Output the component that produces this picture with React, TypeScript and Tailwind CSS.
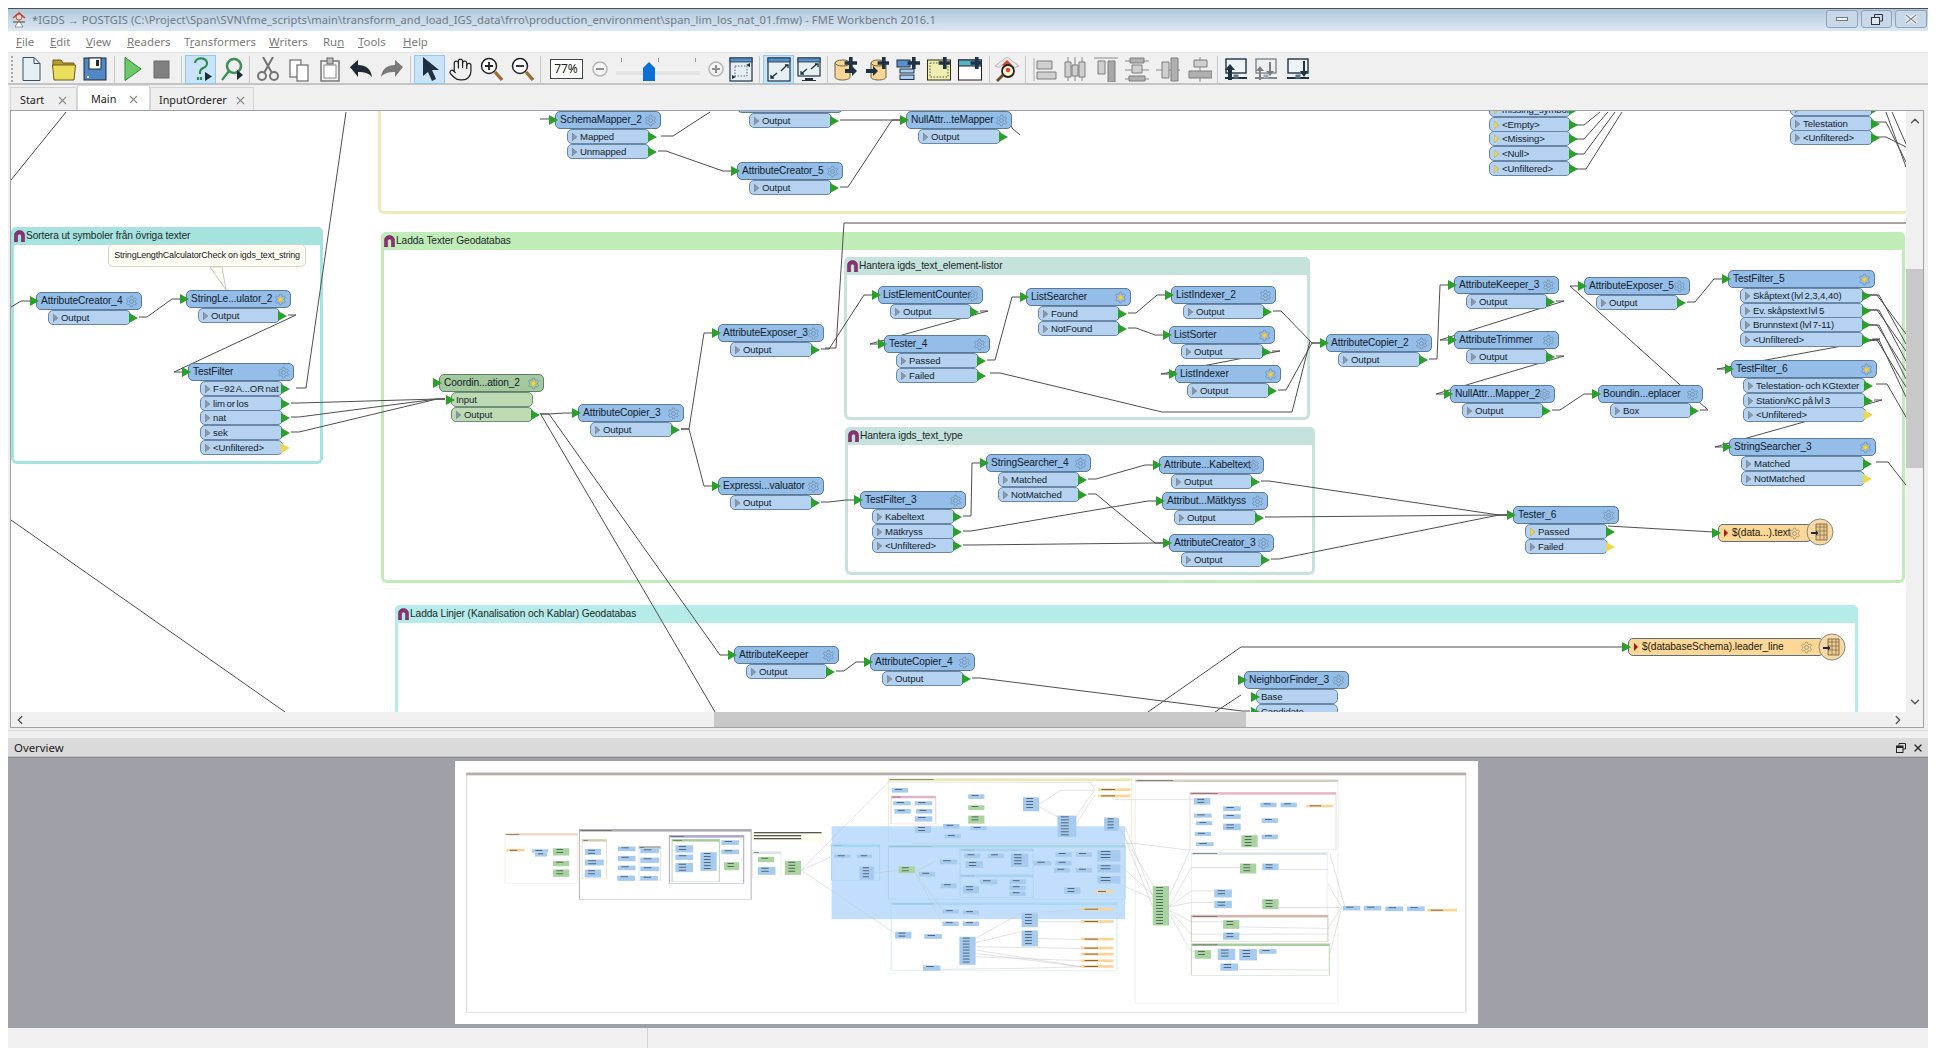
import React from 'react';
import { Hand, X, ChevronUp, ChevronDown, ChevronLeft, ChevronRight } from 'lucide-react';

const OX = 11;
const OY = 112;

type Port = { n: string; yo?: boolean; yi?: boolean; input?: boolean };
type Node = { id: string; t: string; x: number; r: number; y: number; ports: Port[]; sun?: boolean; green?: boolean };
const p = (...names: string[]): Port[] => names.map((n) => ({ n }));

const nodes: Node[] = [
  { id: 'ac4', t: 'AttributeCreator_4', x: 36, r: 142, y: 293, ports: p('Output') },
  { id: 'sl2', t: 'StringLe...ulator_2', x: 186, r: 291, y: 291, ports: p('Output'), sun: true },
  { id: 'tf', t: 'TestFilter', x: 188, r: 294, y: 364, ports: [...p('F=92 A...OR nat', 'lim or los', 'nat', 'sek'), { n: '<Unfiltered>', yo: true }] },
  { id: 'co2', t: 'Coordin...ation_2', x: 439, r: 544, y: 375, green: true, sun: true, ports: [{ n: 'Input', input: true }, { n: 'Output' }] },
  { id: 'ac3', t: 'AttributeCopier_3', x: 578, r: 684, y: 405, ports: p('Output') },
  { id: 'ae3', t: 'AttributeExposer_3', x: 718, r: 824, y: 325, ports: p('Output') },
  { id: 'lec', t: 'ListElementCounter', x: 878, r: 983, y: 287, ports: p('Output') },
  { id: 't4', t: 'Tester_4', x: 884, r: 990, y: 336, ports: p('Passed', 'Failed') },
  { id: 'ls', t: 'ListSearcher', x: 1026, r: 1131, y: 289, ports: p('Found', 'NotFound'), sun: true },
  { id: 'li2', t: 'ListIndexer_2', x: 1171, r: 1276, y: 287, ports: p('Output') },
  { id: 'lso', t: 'ListSorter', x: 1169, r: 1275, y: 327, ports: p('Output'), sun: true },
  { id: 'li', t: 'ListIndexer', x: 1175, r: 1281, y: 366, ports: p('Output'), sun: true },
  { id: 'ev', t: 'Expressi...valuator', x: 718, r: 824, y: 478, ports: p('Output') },
  { id: 'tf3', t: 'TestFilter_3', x: 860, r: 966, y: 492, ports: p('Kabeltext', 'Mätkryss', '<Unfiltered>') },
  { id: 'ss4', t: 'StringSearcher_4', x: 986, r: 1091, y: 455, ports: p('Matched', 'NotMatched') },
  { id: 'akb', t: 'Attribute...Kabeltext', x: 1159, r: 1264, y: 457, ports: p('Output') },
  { id: 'amk', t: 'Attribut...Mätktyss', x: 1162, r: 1268, y: 493, ports: p('Output') },
  { id: 'acr3', t: 'AttributeCreator_3', x: 1169, r: 1274, y: 535, ports: p('Output') },
  { id: 'acp2', t: 'AttributeCopier_2', x: 1326, r: 1432, y: 335, ports: p('Output') },
  { id: 'ak3', t: 'AttributeKeeper_3', x: 1454, r: 1559, y: 277, ports: p('Output') },
  { id: 'atr', t: 'AttributeTrimmer', x: 1454, r: 1559, y: 332, ports: p('Output') },
  { id: 'nm2', t: 'NullAttr...Mapper_2', x: 1450, r: 1555, y: 386, ports: p('Output') },
  { id: 'ae5', t: 'AttributeExposer_5', x: 1584, r: 1690, y: 278, ports: p('Output') },
  { id: 'bo', t: 'Boundin...eplacer', x: 1598, r: 1703, y: 386, ports: p('Box') },
  { id: 'tf5', t: 'TestFilter_5', x: 1728, r: 1875, y: 271, sun: true, ports: p('Skåptext (lvl 2,3,4,40)', 'Ev. skåpstext lvl 5', 'Brunnstext (lvl 7-11)', '<Unfiltered>') },
  { id: 'tf6', t: 'TestFilter_6', x: 1731, r: 1877, y: 361, sun: true, ports: [...p('Telestation- och KGtexter', 'Station/KC på lvl 3'), { n: '<Unfiltered>', yo: true }] },
  { id: 'ss3', t: 'StringSearcher_3', x: 1729, r: 1876, y: 439, sun: true, ports: [{ n: 'Matched' }, { n: 'NotMatched', yo: true }] },
  { id: 't6', t: 'Tester_6', x: 1513, r: 1619, y: 507, ports: [{ n: 'Passed', yi: true }, { n: 'Failed', yo: true }] },
  { id: 'sm2', t: 'SchemaMapper_2', x: 555, r: 661, y: 112, ports: p('Mapped', 'Unmapped') },
  { id: 'to', t: '', x: 737, r: 843, y: 96, ports: p('Output') },
  { id: 'ntm', t: 'NullAttr...teMapper', x: 906, r: 1012, y: 112, ports: p('Output') },
  { id: 'ac5', t: 'AttributeCreator_5', x: 737, r: 843, y: 163, ports: p('Output') },
  { id: 'rt1', t: '', x: 1477, r: 1582, y: 85, ports: ['missing_symbol', '<Empty>', '<Missing>', '<Null>', '<Unfiltered>'].map((n) => ({ n, yi: true })) },
  { id: 'rt2', t: '', x: 1778, r: 1884, y: 84, ports: p('', 'Telestation', '<Unfiltered>') },
  { id: 'ak', t: 'AttributeKeeper', x: 734, r: 839, y: 647, ports: p('Output') },
  { id: 'ac4b', t: 'AttributeCopier_4', x: 870, r: 975, y: 654, ports: p('Output') },
  { id: 'nf3', t: 'NeighborFinder_3', x: 1244, r: 1349, y: 672, ports: [{ n: 'Base', input: true }, { n: 'Candidate', input: true }] },
];

const byId: Record<string, Node> = Object.fromEntries(nodes.map((n) => [n.id, n]));
const portY = (n: Node, i: number) => n.y + 18 + Math.round(i * 14.7);
const outPt = (id: string, i: number): [number, number] => {
  const n = byId[id];
  return [n.r - 11 + 8, portY(n, i) + 7];
};
const inPt = (id: string, i = -1): [number, number] => {
  const n = byId[id];
  return i < 0 ? [n.x - 6, n.y + 9] : [n.x + 6, portY(n, i) + 7];
};
const wirePath = (a: [number, number], b: [number, number]) =>
  `M${a[0] - OX} ${a[1] - OY}h8L${b[0] - 8 - OX} ${b[1] - OY}h8`;

const wires: [string, number, string, number?][] = [
  ['ac4', 0, 'sl2'], ['sl2', 0, 'tf'], ['tf', 1, 'co2', 0], ['tf', 2, 'co2', 0], ['tf', 3, 'co2', 0],
  ['co2', 1, 'ac3'], ['co2', 1, 'ak'], ['ac3', 0, 'ae3'], ['ac3', 0, 'ev'], ['ae3', 0, 'lec'],
  ['lec', 0, 't4'], ['t4', 0, 'ls'], ['ls', 0, 'li2'], ['ls', 1, 'lso'], ['lso', 0, 'li'],
  ['li2', 0, 'acp2'], ['li', 0, 'acp2'], ['acp2', 0, 'ak3'], ['ak3', 0, 'atr'], ['atr', 0, 'nm2'],
  ['nm2', 0, 'bo'], ['bo', 0, 'ae5'], ['ae5', 0, 'tf5'], ['tf5', 3, 'tf6'], ['tf6', 1, 'ss3'],
  ['ev', 0, 'tf3'], ['tf3', 0, 'ss4'], ['tf3', 1, 'amk'], ['tf3', 2, 'acr3'], ['ss4', 0, 'akb'], ['ss4', 1, 'acr3'],
  ['akb', 0, 't6'], ['amk', 0, 't6'], ['acr3', 0, 't6'], ['ak', 0, 'ac4b'], ['ac4b', 0, 'nf3', 1],
  ['sm2', 1, 'ac5'], ['to', 0, 'ntm'], ['ac5', 0, 'ntm'],
];

const rawLines: number[][] = [
  [11, 181, 66, 113],
  [11, 521, 285, 713],
  [11, 308, 21, 302, 30, 302],
  [296, 389, 306, 389, 346, 113],
  [540, 414, 715, 713],
  [825, 349, 836, 349, 844, 224, 1906, 224],
  [990, 374, 1000, 374, 1162, 413, 1292, 413, 1310, 342],
  [1148, 713, 1241, 648, 1624, 648],
  [1215, 713, 1241, 696],
  [1608, 527, 1714, 533],
  [661, 137, 673, 137, 710, 113],
  [540, 120, 556, 120, 564, 113],
  [1020, 136, 1012, 129, 1005, 113],
  [1572, 126, 1584, 126, 1600, 113],
  [1572, 140, 1584, 140, 1608, 113],
  [1572, 155, 1584, 155, 1615, 113],
  [1572, 170, 1586, 170, 1622, 113],
  [1873, 123, 1886, 123, 1906, 163],
  [1873, 138, 1886, 138, 1906, 148],
  [1886, 113, 1906, 168],
  [1892, 113, 1906, 145],
  [1865, 296, 1877, 296, 1906, 335],
  [1865, 296, 1879, 296, 1906, 345],
  [1865, 311, 1877, 311, 1906, 352],
  [1865, 311, 1879, 311, 1906, 362],
  [1865, 326, 1877, 326, 1906, 372],
  [1865, 326, 1879, 326, 1906, 380],
  [1865, 341, 1877, 341, 1906, 388],
  [1865, 341, 1879, 341, 1906, 398],
  [1876, 385, 1887, 385, 1906, 418],
  [1876, 463, 1888, 463, 1906, 486],
];

const marks = [
  { t: 'Ladda Texter Geodatabas', x: 381, y: 232, r: 1905, b: 583, c: 'border-[#c0ecb8]', h: 'bg-[#c0ecb8]' },
  { t: '', x: 378, y: 40, r: 1910, b: 214, c: 'border-[#efe9b7]', h: 'bg-[#efe9b7]' },
  { t: 'Sortera ut symboler från övriga texter', x: 11, y: 227, r: 323, b: 464, c: 'border-[#a6e3de]', h: 'bg-[#a6e3de]' },
  { t: 'Hantera igds_text_element-listor', x: 844, y: 257, r: 1310, b: 420, c: 'border-[#c5e2dc]', h: 'bg-[#c5e2dc]' },
  { t: 'Hantera igds_text_type', x: 845, y: 427, r: 1315, b: 575, c: 'border-[#c5e2dc]', h: 'bg-[#c5e2dc]' },
  { t: 'Ladda Linjer (Kanalisation och Kablar) Geodatabas', x: 395, y: 605, r: 1858, b: 830, c: 'border-[#b5ebe9]', h: 'bg-[#b5ebe9]' },
];

function Arch() {
  return (
    <svg width="11" height="12" viewBox="0 0 11 12" className="shrink-0">
      <path d="M0.5 12V5a5 4.5 0 0 1 10 0v7H7.5V6a2 2 0 0 0-4 0v6z" fill="#8f2f74" stroke="#5a2050" strokeWidth="0.5" />
    </svg>
  );
}

const GEAR =
  'M12.22 2h-.44a2 2 0 0 0-2 2v.18a2 2 0 0 1-1 1.73l-.43.25a2 2 0 0 1-2 0l-.15-.08a2 2 0 0 0-2.73.73l-.22.38a2 2 0 0 0 .73 2.73l.15.1a2 2 0 0 1 1 1.72v.51a2 2 0 0 1-1 1.74l-.15.09a2 2 0 0 0-.73 2.73l.22.38a2 2 0 0 0 2.73.73l.15-.08a2 2 0 0 1 2 0l.43.25a2 2 0 0 1 1 1.73V20a2 2 0 0 0 2 2h.44a2 2 0 0 0 2-2v-.18a2 2 0 0 1 1-1.73l.43-.25a2 2 0 0 1 2 0l.15.08a2 2 0 0 0 2.73-.73l.22-.39a2 2 0 0 0-.73-2.73l-.15-.08a2 2 0 0 1-1-1.74v-.5a2 2 0 0 1 1-1.74l.15-.09a2 2 0 0 0 .73-2.73l-.22-.38a2 2 0 0 0-2.73-.73l-.15.08a2 2 0 0 1-2 0l-.43-.25a2 2 0 0 1-1-1.73V4a2 2 0 0 0-2-2z';

function Gear({ sun, color = '#6f8fae' }: { sun?: boolean; color?: string }) {
  return (
    <svg width="13" height="13" viewBox="0 0 24 24" className="shrink-0">
      <path d={GEAR} fill="none" stroke={color} strokeWidth="1.6" />
      <circle cx="12" cy="12" r="3.6" fill={sun ? '#ffd63a' : 'none'} stroke={sun ? '#e8b820' : color} strokeWidth="1.6" />
    </svg>
  );
}

function GreenTri({ className }: { className: string }) {
  return (
    <svg width="9" height="10" viewBox="0 0 9 10" className={className}>
      <path d="M0 0L9 5L0 10z" fill="#2a9f2a" />
    </svg>
  );
}

const nodeText = 'whitespace-nowrap text-[10.2px] leading-none tracking-[-0.1px]';
const portText = 'whitespace-nowrap text-[9.6px] leading-none tracking-[-0.1px] [word-spacing:-1px]';

function Xform({ n }: { n: Node }) {
  const head = n.green ? 'bg-[#a5c99e] border-[#5f7f6a]' : 'bg-[#94bde7] border-[#5a7a98]';
  const port = n.green ? 'bg-[#bddab3] border-[#6f8f7a]' : 'bg-[#b5d3f0] border-[#6a88a6]';
  return (
    <div className="absolute" style={{ left: n.x - OX, top: n.y - OY, width: n.r - n.x }}>
      <div className={`relative h-[18px] rounded-[5px] border flex items-center pl-[4px] ${head}`}>
        <span className={`${nodeText} text-[#10202c]`}>{n.t}</span>
        <span className="absolute right-[3px] top-[2px] flex">
          <Gear sun={n.sun} />
        </span>
        <GreenTri className="absolute left-[-7px] top-[3px]" />
      </div>
      {n.ports.map((pt, i) => (
        <div
          key={i}
          className={`absolute left-[12px] right-[11px] h-[15px] rounded-[5px] border flex items-center ${port}`}
          style={{ top: 18 + Math.round(i * 14.7) }}
        >
          {pt.input ? (
            <GreenTri className="absolute left-[-6px] top-[2px]" />
          ) : (
            <>
              <svg width="5" height="8" viewBox="0 0 5 8" className="ml-[4px] mr-[3px] shrink-0">
                <path d="M0 0L5 4L0 8z" fill={pt.yi ? '#e8d860' : '#8a97a8'} stroke={pt.yi ? '#a89a40' : '#6f7c8c'} strokeWidth="0.5" />
              </svg>
              <svg width="9" height="10" viewBox="0 0 9 10" className="absolute right-[-8px] top-[2px]">
                <path d="M0 0L9 5L0 10z" fill={pt.yo ? '#ecd850' : '#2a9f2a'} />
              </svg>
            </>
          )}
          <span className={`${portText} text-[#14222e] ${pt.input ? 'ml-[4px]' : ''}`}>{pt.n}</span>
        </div>
      ))}
    </div>
  );
}

function Writer({ t, x, r, y, h, cx, cy }: { t: string; x: number; r: number; y: number; h: number; cx: number; cy: number }) {
  return (
    <>
      <div
        className="absolute rounded-[5px] border border-[#5a7080] bg-[#fdd796] flex items-center"
        style={{ left: x - OX, top: y - OY, width: r - x, height: h }}
      >
        <GreenTri className="absolute left-[-7px] top-[3px]" />
        <svg width="4" height="8" viewBox="0 0 4 8" className="ml-[5px] mr-[4px] shrink-0">
          <path d="M0 0L4 4L0 8z" fill="#b01818" />
        </svg>
        <span className={`${nodeText} text-[#1a1a10]`}>{t}</span>
        <span className="absolute right-[10px] top-[2px]">
          <Gear color="#9a8f70" />
        </span>
      </div>
      <svg className="absolute" width="28" height="28" viewBox="0 0 28 28" style={{ left: cx - 14 - OX, top: cy - 14 - OY }}>
        <circle cx="14" cy="14" r="13" fill="#f6d9a6" stroke="#8a8a78" />
        <path d="M10 6h11v16H10z" fill="#f0c88a" stroke="#6a5a40" strokeWidth="0.8" />
        <path d="M10 9h11M10 13h11M10 17h11M14 6v16M18 6v16" stroke="#7a6a50" strokeWidth="0.7" fill="none" />
        <path d="M5 14h5v-1.5l2.5 2.5-2.5 2.5V16H5z" fill="#1d2a35" />
      </svg>
    </>
  );
}

function Canvas() {
  return (
    <div className="relative flex-1 min-w-0 bg-white overflow-hidden font-['Liberation_Sans',sans-serif]">
      {marks.map((m) => (
        <div
          key={m.t + m.x}
          className={`absolute border-[3px] border-t-0 rounded-[6px] bg-white ${m.c}`}
          style={{ left: m.x - OX, top: m.y - OY + 1, width: m.r - m.x, height: m.b - m.y }}
        >
          <div className={`h-[18px] -mx-[3px] rounded-t-[5px] pl-[3px] flex items-center gap-[1px] ${m.h}`}>
            {m.t && <Arch />}
            <span className={`${nodeText} text-[#1c2a2a]`}>{m.t}</span>
          </div>
        </div>
      ))}
      <svg className="absolute left-0 top-0" width="1895" height="601" viewBox="0 0 1895 601">
        <g fill="none" stroke="#4f4f4f" strokeWidth="1">
          {wires.map(([a, i, b, j], k) => (
            <path key={k} d={wirePath(outPt(a, i), inPt(b, j ?? -1))} />
          ))}
          {rawLines.map((l, k) => (
            <polyline key={k} points={l.map((v, idx) => v - (idx % 2 ? OY : OX)).join(' ')} />
          ))}
        </g>
        <path d="M199 156L215 179L211 156z" fill="#fefdf3" stroke="#c9c9bd" />
      </svg>
      <div className="absolute left-[97px] top-[133px] w-[198px] h-[23px] rounded-[5px] border border-[#d5d5c8] bg-[#fefdf3] flex items-center justify-center">
        <span className="whitespace-nowrap text-[9px] leading-none text-[#222] tracking-[-0.2px]">StringLengthCalculatorCheck on igds_text_string</span>
      </div>
      {nodes.map((n) => (
        <Xform key={n.id} n={n} />
      ))}
      <Writer t="$(data...).text" x={1718} r={1812} y={525} h={18} cx={1820} cy={533} />
      <Writer t="$(databaseSchema).leader_line" x={1628} r={1824} y={639} h={18} cx={1832} cy={648} />
    </div>
  );
}

/* ---------- Overview miniature ---------- */
const miniMarks: [number, number, number, number, string, string][] = [
  [98, 249, 205, 400, '#eed9c8', '#f6ece4'],
  [208, 237, 462, 448, '#a8a8ac', '#b4b4b8'],
  [212, 267, 248, 386, '#d8c8b0', '#e8e0d2'],
  [296, 288, 328, 392, '#b0b0b0', '#e4e4e4'],
  [341, 255, 451, 400, '#a9a5cc', '#a9a5cc'],
  [345, 267, 415, 395, '#a0cc98', '#b4d8ae'],
  [464, 304, 506, 382, '#d8e4e0', '#eaf0ee'],
  [581, 283, 652, 391, '#8fdfe0', '#9fe4e4'],
  [665, 85, 1025, 275, '#ece8b0', '#f0eec4'],
  [669, 137, 735, 221, '#e0b4c8', '#ecd0dc'],
  [665, 285, 1015, 447, '#a0dcb0', '#a8dcc0'],
  [771, 296, 879, 372, '#b4d0cc', '#b4d4dc'],
  [771, 374, 879, 442, '#b4d0cc', '#b4d4dc'],
  [669, 458, 1003, 662, '#a8e4e4', '#c8f0f0'],
  [1030, 88, 1330, 760, '#d4d0c0', '#eeeeea'],
  [1111, 126, 1327, 299, '#e4b4c4', '#ecd8e0'],
  [1113, 307, 1314, 492, '#d8e4ec', '#e8eff4'],
  [1113, 495, 1315, 575, '#d0b8a8', '#dcc4b8'],
  [1113, 581, 1317, 677, '#a8cca0', '#c0d8ba'],
];
const miniB = [
  [138, 297, 24, 10], [142, 307, 18, 12], [216, 296, 24, 18], [216, 328, 28, 18], [216, 358, 24, 24], [265, 289, 26, 14], [265, 317, 26, 16], [265, 346, 26, 14], [264, 376, 26, 16],
  [298, 295, 28, 14], [298, 322, 28, 16], [298, 349, 28, 14], [298, 377, 26, 14], [350, 285, 26, 22], [350, 313, 26, 16], [350, 338, 26, 28], [387, 306, 24, 56], [418, 270, 26, 14], [418, 298, 26, 14],
  [472, 350, 26, 24], [585, 313, 24, 10], [619, 313, 22, 10], [622, 349, 22, 40], [670, 113, 24, 14], [672, 153, 26, 12], [704, 153, 26, 12], [674, 176, 24, 14], [706, 176, 24, 14], [704, 198, 26, 16],
  [704, 228, 24, 20], [746, 221, 24, 14], [748, 252, 24, 12], [783, 132, 24, 14], [786, 228, 24, 12], [864, 141, 24, 42], [915, 196, 28, 64], [984, 202, 22, 40], [710, 365, 24, 14], [741, 328, 26, 14],
  [742, 400, 24, 14], [777, 310, 24, 14], [812, 310, 24, 14], [846, 310, 26, 40], [779, 333, 26, 20], [800, 388, 26, 14], [775, 406, 24, 24], [844, 388, 24, 14], [844, 406, 24, 14], [844, 424, 24, 14],
  [925, 411, 24, 20], [880, 332, 26, 14], [912, 306, 24, 14], [912, 332, 24, 14], [910, 353, 24, 14], [942, 306, 24, 14], [942, 353, 24, 14], [974, 300, 34, 34], [974, 343, 34, 24], [974, 378, 34, 22],
  [745, 478, 24, 12], [775, 481, 24, 12], [745, 514, 24, 14], [775, 514, 24, 14], [675, 545, 24, 20], [718, 552, 26, 14], [770, 560, 24, 84], [862, 489, 24, 42], [862, 541, 24, 48], [716, 646, 26, 16],
  [1117, 143, 24, 20], [1117, 190, 26, 12], [1120, 213, 24, 12], [1118, 245, 24, 12], [1120, 276, 26, 12], [1160, 168, 26, 14], [1160, 192, 26, 14], [1160, 220, 26, 20], [1215, 157, 24, 14], [1245, 157, 24, 14],
  [1217, 204, 24, 14], [1217, 253, 24, 14], [1218, 340, 24, 20], [1147, 418, 26, 24], [1147, 452, 26, 22], [1160, 547, 24, 22], [1152, 596, 26, 34], [1184, 597, 26, 34], [1213, 597, 26, 14], [1156, 640, 26, 22],
  [1337, 467, 26, 14], [1368, 467, 26, 14], [1400, 469, 26, 14], [1432, 469, 26, 14],
];
const miniG = [
  [169, 294, 24, 22], [169, 332, 24, 16], [169, 358, 24, 22], [422, 336, 22, 24], [472, 320, 24, 16], [512, 332, 24, 42], [783, 165, 24, 14], [783, 196, 24, 24], [680, 349, 24, 20], [1056, 408, 24, 118],
  [1187, 255, 24, 36], [1185, 340, 24, 30], [1218, 447, 24, 30], [1160, 510, 24, 26], [1118, 600, 24, 26],
];
const miniO = [
  [100, 296, 27, 8], [975, 114, 48, 8], [975, 133, 48, 8], [970, 420, 28, 8], [950, 473, 48, 8], [950, 510, 48, 8], [950, 563, 48, 8], [950, 590, 48, 8], [950, 608, 48, 8], [950, 628, 48, 8], [950, 645, 48, 8], [1283, 163, 40, 8], [1462, 476, 44, 8],
];
const miniLines: number[][] = [
  [536, 360, 580, 320], [536, 360, 665, 95, 965, 97, 970, 120], [536, 360, 675, 550], [640, 370, 680, 360], [704, 365, 735, 332], [704, 365, 745, 480], [704, 365, 745, 520], [880, 160, 915, 200], [885, 165, 920, 120, 970, 120],
  [940, 205, 970, 120], [940, 230, 970, 135], [1010, 240, 1056, 470], [1015, 230, 1060, 460], [1005, 340, 1060, 440], [1005, 400, 1060, 450], [1000, 210, 1060, 420], [795, 600, 950, 650], [795, 610, 950, 650], [795, 620, 950, 632],
  [795, 590, 950, 595], [790, 570, 860, 490, 950, 478], [790, 580, 860, 545], [880, 515, 950, 515], [880, 565, 950, 568], [740, 658, 860, 655, 950, 650], [1080, 470, 1113, 352, 1185, 352], [1080, 470, 1113, 422, 1147, 422], [1080, 470, 1113, 457, 1147, 457],
  [1080, 480, 1113, 515, 1160, 515], [1080, 480, 1113, 552, 1160, 552], [1080, 490, 1113, 605, 1120, 605], [1080, 440, 1111, 300, 1030, 280, 700, 280], [1318, 310, 1340, 470], [1315, 400, 1335, 470], [1315, 535, 1335, 472], [1318, 610, 1335, 475],
  [1180, 658, 1316, 660], [1000, 148, 1118, 148], [1242, 358, 1315, 358], [1240, 472, 1335, 472], [1170, 530, 1316, 535], [1170, 552, 1315, 552],
];

function MiniNode({ r, fill }: { r: number[]; fill: string }) {
  const [x, y, w, h] = r;
  const rows = Math.max(1, Math.floor(h / 9));
  return (
    <g>
      <rect x={x} y={y} width={w} height={h} fill={fill} />
      {Array.from({ length: rows }).map((_, i) => (
        <rect key={i} x={x + 5} y={y + 3 + i * 9} width={w * 0.42} height="1.8" fill="#1c2630" />
      ))}
    </g>
  );
}

function OverviewMap() {
  return (
    <svg className="block w-full h-full" viewBox="24 32 1513 790" preserveAspectRatio="none">
      <rect x="41" y="68" width="1478" height="719" fill="#fff" stroke="#dcdcdc" strokeWidth="2" />
      <rect x="41" y="67" width="1478" height="8" fill="#b8a8a8" />
      {miniMarks.map(([a, b, c, d, head, bd], i) => (
        <g key={i}>
          <rect x={a} y={b} width={c - a} height={d - b} fill="none" stroke={bd} strokeWidth="1.5" />
          <rect x={a} y={b} width={c - a} height="7" fill={head} />
          <rect x={a + 2} y={b + 2.500} width={(c - a) * 0.18} height="1.6" fill="#444" />
        </g>
      ))}
      <rect x="465" y="245" width="105" height="30" fill="#fdfdf0" />
      <rect x="466" y="246" width="100" height="3" fill="#222" />
      <rect x="466" y="255" width="70" height="3" fill="#222" />
      <rect x="466" y="264" width="70" height="3" fill="#222" />
      <rect x="581" y="228" width="434" height="279" fill="#a9d2fb" fillOpacity="0.72" />
      <g fill="none" stroke="#c8c8c8" strokeWidth="1">
        {miniLines.map((l, i) => (
          <polyline key={i} points={l.join(' ')} />
        ))}
      </g>
      {miniB.map((r, i) => <MiniNode key={i} r={r} fill="#a6cbef" />)}
      {miniG.map((r, i) => <MiniNode key={i} r={r} fill="#a9d3a0" />)}
      {miniO.map((r, i) => <MiniNode key={i} r={r} fill="#fcd596" />)}
    </svg>
  );
}

/* ---------- Toolbar ---------- */
const IK = '#1d3344';
const Plus = ({ x, y }: { x: number; y: number }) => (
  <path d={`M${x} ${y - 6}h3.6v4.2h4.4v3.6h-4.4v4.2h-3.6v-4.2h-4.4v-3.6h4.4z`} fill={IK} />
);
const Cyl = () => (
  <g fill="#fcd695" stroke="#6a6040" strokeWidth="1">
    <path d="M1 6v14c0 2 4 3 7.5 3s7.500-1 7.500-3V6" />
    <ellipse cx="8.5" cy="6" rx="7.500" ry="3" />
  </g>
);
const Mon = () => (
  <g>
    <rect x="2" y="2" width="20" height="14" fill="#eef3f5" stroke={IK} strokeWidth="1.4" />
    <rect x="1" y="20" width="22" height="2" fill={IK} />
    <rect x="9.500" y="17.500" width="5" height="4" fill="#5e7484" />
  </g>
);
const Gr = ({ d, f }: { d: string; f?: string }) => <path d={d} fill={f ?? '#cfcfcf'} stroke="#7d7d7d" strokeWidth="1" />;

const icons: Record<string, React.ReactNode> = {
  nw: <g><path d="M3 0.5h11l6 6v17H3z" fill="#e6f0f4" stroke="#38505f" /><path d="M14 0.500v6h6" fill="none" stroke="#38505f" /></g>,
  op: <g><path d="M1 6V3h8l2 3h11v4H1z" fill="#b89a30" stroke="#6a5a14" /><path d="M0.5 8h23l-1.500 15H2z" fill="#eade5c" stroke="#6a5a14" /></g>,
  sv: <g><rect x="1" y="1" width="22" height="22" fill="#4f87c7" stroke="#1c2c3c" /><rect x="6" y="1" width="12" height="11" fill="#fff" stroke="#1c2c3c" /><rect x="4" y="19" width="2" height="2" fill="#fff" /><rect x="13" y="3" width="3" height="6" fill="#1c2c3c" /></g>,
  pl: <path d="M4 0.500L20 12L4 23.500z" fill="#6dc96c" stroke="#2e8a2e" />,
  st: <rect x="4" y="4" width="15" height="17" fill="#808080" stroke="#6a6a6a" />,
  hp: <g><path d="M6 6a6 5 0 1 1 8 5c-3 2-3 3-3 6M9 20v3M12 20v3" fill="none" stroke="#2f8a50" strokeWidth="2.2" /><path d="M16 15l7 4.500-7 4.500z" fill="#1c2c3c" /></g>,
  fd: <g><circle cx="14" cy="9" r="7" fill="none" stroke="#3e8f58" strokeWidth="2.600" /><path d="M9 14L2 23" stroke="#3e8f58" strokeWidth="2.200" /><path d="M17 13l6 5-6 5z" fill="#1c2c3c" /></g>,
  sc: <g fill="none" stroke="#727272" strokeWidth="2"><circle cx="6" cy="19" r="4" /><circle cx="18" cy="19" r="4" /><path d="M8 16L17 0M16 16L7 0" /></g>,
  cp: <g fill="#fff" stroke="#777" strokeWidth="1.300"><rect x="3" y="3" width="11" height="17" /><rect x="10" y="8" width="11" height="16" /></g>,
  ps: <g><rect x="3" y="4" width="18" height="20" fill="#f2f2f2" stroke="#777" strokeWidth="1.500" /><rect x="6" y="8" width="12" height="13" fill="#fff" stroke="#888" /><rect x="9" y="1" width="6" height="6" fill="#bbb" stroke="#666" /></g>,
  un: <path d="M1 8l8-7v5c8 0 13 4 14 12-3-4-8-5-14-5v5z" fill="#212a33" transform="translate(0 2)" />,
  re: <path d="M23 8l-8-7v5C7 6 2 10 1 18c3-4 8-5 14-5v5z" fill="#7a7a7a" transform="translate(0 2)" />,
  se: <path d="M5 0L5 19L10 15L14 24L18 22L14 13L21 13z" fill="#1d2f40" />,
  zi: <g><circle cx="10" cy="9" r="7.500" fill="#fff" stroke="#222" strokeWidth="1.500" /><path d="M6 9h8M10 5v8" stroke="#222" strokeWidth="1.800" /><path d="M16 15l7 8" stroke="#9c6d34" strokeWidth="3.400" /></g>,
  zo: <g><circle cx="10" cy="9" r="7.500" fill="#fff" stroke="#222" strokeWidth="1.500" /><path d="M6 9h8" stroke="#222" strokeWidth="1.800" /><path d="M16 15l7 8" stroke="#9c6d34" strokeWidth="3.400" /></g>,
  mi: <g><circle cx="12" cy="12" r="7" fill="#f4f4f4" stroke="#b4b4b4" strokeWidth="1.500" /><path d="M8 12h8" stroke="#8f8f8f" strokeWidth="2" /></g>,
  pu: <g><circle cx="12" cy="12" r="7" fill="#f4f4f4" stroke="#b4b4b4" strokeWidth="1.500" /><path d="M8 12h8M12 8v8" stroke="#8f8f8f" strokeWidth="2" /></g>,
  ft: <g><rect x="1" y="1" width="22" height="23" fill="#e6eff2" stroke={IK} strokeWidth="1.200" /><rect x="1" y="1" width="22" height="4" fill="#5a90c8" stroke={IK} strokeWidth="0.800" /><rect x="6" y="9" width="12" height="10" fill="none" stroke="#667" strokeDasharray="1.500 1.500" /><path d="M17 8l4-2v4zM7 20l-4 2v-4z" fill={IK} /></g>,
  fz: <g><rect x="1" y="1" width="22" height="23" fill="#e6eff2" stroke={IK} strokeWidth="1.200" /><rect x="1" y="1" width="22" height="4" fill="#5a90c8" stroke={IK} strokeWidth="0.800" /><path d="M14 14L20 8M18 8h3v3M10 16L4 21M4 18v3h3" stroke={IK} fill="none" strokeWidth="1.400" /></g>,
  fm: <g><rect x="1" y="1" width="22" height="18" fill="#e6eff2" stroke={IK} strokeWidth="1.200" /><rect x="1" y="1" width="22" height="4" fill="#5a90c8" stroke={IK} strokeWidth="0.800" /><path d="M8 21h8v2H8zM5 23h14v1H5z" fill={IK} /><path d="M14 12L20 7M18 7h3v3M10 12L4 17M4 14v3h3" stroke={IK} fill="none" strokeWidth="1.300" /></g>,
  d1: <g><Cyl /><Plus x={15} y={6} /><path d="M11 12h7v-3l5 5-5 5v-3h-7z" fill={IK} /></g>,
  d2: <g transform="translate(1 0)"><g transform="translate(4 0)"><Cyl /></g><Plus x={16} y={6} /><path d="M0 12h7v-3l5 5-5 5v-3H0z" fill={IK} /></g>,
  bm: <g><rect x="1" y="3" width="13" height="7" fill="#5b8fc9" stroke={IK} /><rect x="4" y="12" width="14" height="4" fill="#a9cdf0" stroke={IK} /><rect x="4" y="18" width="14" height="4.500" fill="#a9cdf0" stroke={IK} /><Plus x={16} y={6} /></g>,
  an: <g><rect x="0.500" y="3" width="23" height="20" fill="#efeeb0" stroke="#302a10" /><rect x="3" y="6" width="18" height="14" fill="none" stroke="#555" strokeDasharray="1.500 1.500" /><Plus x={16} y={6} /></g>,
  bk: <g><rect x="0.500" y="3" width="23" height="20" fill="#fff" stroke="#301028" /><rect x="0.500" y="3" width="23" height="6" fill="#4fb6c0" stroke="#301028" /><Plus x={17} y={6} /></g>,
  ins: <g><path d="M0 9L12 0l12 9-4 1.500-8-6-8 6z" fill="#eee" stroke="#a88" strokeWidth="0.600" /><path d="M7 8l5-5 5 5-5 2z" fill="#e04030" /><circle cx="13" cy="14" r="6" fill="#fff6d0" stroke="#222" strokeWidth="1.800" /><circle cx="13" cy="13" r="2.200" fill="#e04030" /><path d="M8 18l-6 6" stroke="#6a4a20" strokeWidth="2.800" /></g>,
  a1: <g><path d="M1 1v23" stroke="#aaa" fill="none" /><Gr d="M4 4h15v8H4z" /><Gr d="M4 15h19v7H4z" /></g>,
  a2: <g><path d="M5 0v24M12 0v24M19 0v24" stroke="#888" fill="none" /><Gr d="M2 5h6v15H2z" /><Gr d="M9 8h6v11H9z" /><Gr d="M16 5h6v15h-6z" /></g>,
  a3: <g><path d="M0 1h24" stroke="#888" fill="none" /><Gr d="M4 4h7v13H4z" /><Gr d="M14 4h7v21h-7z" f="#a8a8a8" /></g>,
  a4: <g><path d="M0 4h24M0 13h24M0 22h24" stroke="#888" fill="none" /><Gr d="M5 1h14v5H5z" f="#b0b0b0" /><Gr d="M7 8h10v8H7z" /><Gr d="M4 19h16v5H4z" f="#b0b0b0" /></g>,
  a5: <g><path d="M0 13h24" stroke="#888" fill="none" /><Gr d="M6 5h7v16H6z" /><Gr d="M15 1h7v23h-7z" f="#b0b0b0" /></g>,
  a6: <g><path d="M12 0v25" stroke="#888" fill="none" /><Gr d="M6 3h13v7H6z" /><Gr d="M1 14h23v7H1z" f="#b0b0b0" /></g>,
  m1: <g><Mon /><path d="M7 24v-10h-3l5-6 5 6h-3v10z" fill={IK} transform="translate(-3 -1)" /></g>,
  m2: <g opacity="0.55"><Mon /><path d="M5 23v-9H2l4-5 4 5H7v9zM17 5v9h3l-4 5-4-5h3V5z" fill="#222" /></g>,
  m3: <g><Mon /><path d="M16 3v10h3l-4 6-4-6h3V3z" fill={IK} transform="translate(3 1)" /></g>,
};

type Item =
  | { k: 'ic'; c: number; i: string; hl?: boolean }
  | { k: 'sep'; c: number }
  | { k: 'hand'; c: number }
  | { k: 'box'; c: number }
  | { k: 'slider'; c: number };

const tb: Item[] = [
  { k: 'ic', c: 32, i: 'nw' }, { k: 'ic', c: 64, i: 'op' }, { k: 'ic', c: 95, i: 'sv' }, { k: 'sep', c: 114 }, { k: 'ic', c: 133, i: 'pl' }, { k: 'ic', c: 162, i: 'st' }, { k: 'sep', c: 181 },
  { k: 'ic', c: 200.5, i: 'hp', hl: true }, { k: 'ic', c: 232, i: 'fd' }, { k: 'sep', c: 249 }, { k: 'ic', c: 268, i: 'sc' }, { k: 'ic', c: 299, i: 'cp' }, { k: 'ic', c: 330, i: 'ps' }, { k: 'ic', c: 361, i: 'un' }, { k: 'ic', c: 392, i: 're' }, { k: 'sep', c: 410 },
  { k: 'ic', c: 429.5, i: 'se', hl: true }, { k: 'hand', c: 460 }, { k: 'ic', c: 491, i: 'zi' }, { k: 'ic', c: 522, i: 'zo' }, { k: 'sep', c: 540 }, { k: 'box', c: 566 }, { k: 'ic', c: 600, i: 'mi' }, { k: 'slider', c: 658 }, { k: 'ic', c: 716, i: 'pu' },
  { k: 'ic', c: 741, i: 'ft' }, { k: 'sep', c: 759 }, { k: 'ic', c: 778.5, i: 'fz', hl: true }, { k: 'ic', c: 809, i: 'fm' }, { k: 'sep', c: 827 }, { k: 'ic', c: 846, i: 'd1' }, { k: 'ic', c: 877, i: 'd2' }, { k: 'ic', c: 908, i: 'bm' }, { k: 'ic', c: 939, i: 'an' }, { k: 'ic', c: 970, i: 'bk' }, { k: 'sep', c: 989 },
  { k: 'ic', c: 1007, i: 'ins' }, { k: 'sep', c: 1025 }, { k: 'ic', c: 1045, i: 'a1' }, { k: 'ic', c: 1075, i: 'a2' }, { k: 'ic', c: 1106, i: 'a3' }, { k: 'ic', c: 1137, i: 'a4' }, { k: 'ic', c: 1168, i: 'a5' }, { k: 'ic', c: 1200, i: 'a6' }, { k: 'sep', c: 1217 }, { k: 'ic', c: 1236, i: 'm1' }, { k: 'ic', c: 1266, i: 'm2' }, { k: 'ic', c: 1298, i: 'm3' },
];

function Toolbar() {
  return (
    <div className="h-[33px] shrink-0 bg-[#f0f0f0] border-t border-b-2 border-t-[#e4e4e4] border-b-[#c4c4c4] flex items-center pl-[3px] pt-[2px]">
      <div className="w-[3px] h-[26px] mr-[2px] shrink-0 border-l-2 border-dotted border-[#a8a8a8]" />
      {tb.map((it, idx) => {
        const left = idx === 0 ? 16 : (tb[idx - 1].c + it.c) / 2;
        const right = idx === tb.length - 1 ? it.c + 15 : (it.c + tb[idx + 1].c) / 2;
        return (
          <div key={idx} className="relative h-[29px] shrink-0" style={{ width: right - left }}>
            <div className="absolute top-0 bottom-0 w-[100px] flex items-center justify-center" style={{ left: it.c - left - 50 }}>
              {it.k === 'sep' && <div className="w-px h-[27px] bg-[#c6c6c6]" />}
              {it.k === 'ic' && (
                <>
                  {it.hl && <div className="absolute left-[34.5px] w-[31px] top-0 bottom-0 bg-[#c9e3f8] border border-[#90c8f4]" />}
                  <svg className="relative" width="24" height="25" viewBox="0 0 24 25">
                    {icons[it.i]}
                  </svg>
                </>
              )}
              {it.k === 'hand' && <Hand size={25} strokeWidth={1.2} color="#222" />}
              {it.k === 'box' && (
                <div className="w-[33px] h-[20px] bg-white border border-[#444] flex items-center justify-center text-[12px] text-[#222] font-['Noto_Sans',sans-serif]">77%</div>
              )}
              {it.k === 'slider' && (
                <div className="relative w-[84px] h-[26px]">
                  <div className="absolute left-0 right-0 top-[15px] h-[4px] bg-[#e4e4e4]" />
                  <div className="absolute left-[5px] top-[2px] w-px h-[4px] bg-[#999]" />
                  <div className="absolute left-[42px] top-[2px] w-px h-[4px] bg-[#999]" />
                  <div className="absolute left-[79px] top-[2px] w-px h-[4px] bg-[#999]" />
                  <svg className="absolute left-[27px] top-[6px]" width="12" height="19" viewBox="0 0 12 19">
                    <path d="M6 0L12 6V19H0V6z" fill="#0a6fd6" />
                  </svg>
                </div>
              )}
            </div>
          </div>
        );
      })}
    </div>
  );
}

const menu = [
  ['', 'F', 'ile', 'w-[34px]'],
  ['', 'E', 'dit', 'w-[36px]'],
  ['', 'V', 'iew', 'w-[41px]'],
  ['', 'R', 'eaders', 'w-[57px]'],
  ['T', 'r', 'ansformers', 'w-[85px]'],
  ['', 'W', 'riters', 'w-[54px]'],
  ['Ru', 'n', '', 'w-[35px]'],
  ['', 'T', 'ools', 'w-[45px]'],
  ['', 'H', 'elp', 'w-[40px]'],
];

function Tab({ t, active, w, pl, pr }: { t: string; active?: boolean; w: string; pl: string; pr: string }) {
  return (
    <div className={`relative flex items-center justify-between pt-[2px] ${w} ${pl} ${pr} ${active ? 'h-[25px] bg-white border-x border-t border-[#d9d9d9]' : 'h-[23px] border-x border-t border-[#d4d4d4] bg-[#efefef]'}`}>
      <span className="text-[10.8px] text-[#222]">{t}</span>
      <X size={13} color="#8a8a8a" strokeWidth={2} />
    </div>
  );
}

export default function App() {
  return (
    <div className="w-[1936px] h-[1056px] bg-white pt-2 px-2 pb-2 overflow-hidden font-['Noto_Sans',sans-serif]">
      <div className="w-[1920px] h-[1040px] flex flex-col border-t border-[#4a4f55] bg-[#f0f0f0]">
        {/* title bar */}
        <div className="h-[22px] shrink-0 flex items-center pl-[4px] bg-gradient-to-b from-[#b2c8dc] to-[#dce8f3] relative">
          <svg width="14" height="16" viewBox="0 0 14 16" className="shrink-0">
            <circle cx="7" cy="5" r="3" fill="#f3d8c8" stroke="#b04030" strokeWidth="0.800" />
            <path d="M1 6l6-5 6 5" fill="none" stroke="#c03828" strokeWidth="1.400" />
            <path d="M3 15l4-7 4 7z" fill="#fff" stroke="#707070" strokeWidth="0.700" />
            <path d="M1 10h12" stroke="#705838" strokeWidth="1.200" />
          </svg>
          <span className="ml-[6px] text-[11.15px] leading-none text-[#6e7a86] whitespace-nowrap tracking-[0.08px]">
            *IGDS → POSTGIS (C:\Project\Span\SVN\fme_scripts\main\transform_and_load_IGS_data\frro\production_environment\span_lim_los_nat_01.fmw) - FME Workbench 2016.1
          </span>
          <div className="absolute right-[1px] top-[1px] flex gap-[3px]">
            <div className="w-[32px] h-[18px] rounded-[3px] border border-[#8ea4ba] bg-[#c8d8e6] flex items-center justify-center">
              <div className="w-[12px] h-[4px] bg-[#f4f6f8] border border-[#6a7a88]" />
            </div>
            <div className="w-[31px] h-[18px] rounded-[3px] border border-[#8ea4ba] bg-[#c8d8e6] flex items-center justify-center">
              <svg width="12" height="11" viewBox="0 0 12 11">
                <path d="M3.500 3V0.500h8V7H9" fill="none" stroke="#2a3844" />
                <rect x="0.500" y="3.500" width="8" height="7" fill="#dfe8f0" stroke="#2a3844" />
              </svg>
            </div>
            <div className="w-[32px] h-[18px] rounded-[3px] border border-[#8ea4ba] bg-[#c8d8e6] flex items-center justify-center">
              <svg width="14" height="10" viewBox="0 0 14 10">
                <path d="M2 1l10 8M12 1L2 9" stroke="#f5f8fa" strokeWidth="3.500" />
                <path d="M2 1l10 8M12 1L2 9" stroke="#7a8894" strokeWidth="1.200" />
              </svg>
            </div>
          </div>
        </div>
        {/* menu */}
        <div className="h-[21px] shrink-0 bg-white flex items-center pl-[8px]">
          {menu.map(([a, u, b, w]) => (
            <div key={u + b} className={`${w} text-[11.4px] leading-none text-[#7a7a7a] whitespace-nowrap shrink-0`}>
              {a}
              <span className="underline">{u}</span>
              {b}
            </div>
          ))}
        </div>
        <Toolbar />
        {/* tabs */}
        <div className="h-[25px] shrink-0 flex items-end pl-[2px] bg-[#f0f0f0]">
          <Tab t="Start" w="w-[67px]" pl="pl-[9px]" pr="pr-[7px]" />
          <Tab t="Main" w="w-[73px]" pl="pl-[13px]" pr="pr-[9px]" active />
          <Tab t="InputOrderer" w="w-[104px]" pl="pl-[8px]" pr="pr-[6px]" />
        </div>
        {/* canvas frame */}
        <div className="h-[618px] shrink-0 ml-[2px] mr-[4px] border border-[#a0a0a8] bg-white flex flex-col">
          <div className="flex-1 min-h-0 flex">
            <Canvas />
            <div className="w-[17px] shrink-0 bg-[#f0f0f0] flex flex-col">
              <div className="h-[20px] flex items-center justify-center">
                <ChevronUp size={14} color="#505050" strokeWidth={2.2} />
              </div>
              <div className="h-[138px]" />
              <div className="h-[199px] bg-[#c8c8c8]" />
              <div className="flex-1" />
              <div className="h-[20px] flex items-center justify-center">
                <ChevronDown size={14} color="#505050" strokeWidth={2.2} />
              </div>
            </div>
          </div>
          <div className="h-[15px] shrink-0 bg-[#f0f0f0] flex items-center">
            <div className="w-[703px] flex items-center pl-[2px]">
              <ChevronLeft size={14} color="#505050" strokeWidth={2.2} />
            </div>
            <div className="w-[532px] h-full bg-[#c8c8c8]" />
            <div className="flex-1 flex items-center justify-end pr-[18px]">
              <ChevronRight size={14} color="#505050" strokeWidth={2.2} />
            </div>
          </div>
        </div>
        {/* splitter */}
        <div className="h-[10px] shrink-0 bg-[#f0f0f0] pt-[2px]">
          <div className="h-px bg-[#d8d8d8]" />
        </div>
        {/* overview */}
        <div className="h-[19px] shrink-0 bg-[#dadada] border-b border-[#c0c0c0] flex items-center justify-between pl-[6px] pr-[4px] pt-[1px]">
          <span className="text-[11.4px] leading-none text-[#222]">Overview</span>
          <div className="flex items-center gap-[6px]">
            <svg width="10" height="10" viewBox="0 0 10 10">
              <path d="M3 2.500V0.500h6.500V6H7" fill="none" stroke="#222" />
              <rect x="0.500" y="3" width="6.500" height="6.500" fill="none" stroke="#222" />
              <rect x="0.500" y="3" width="6.500" height="2" fill="#222" />
            </svg>
            <X size={12} color="#222" strokeWidth={2.4} />
          </div>
        </div>
        <div className="h-[271px] shrink-0 bg-[#a0a0a8] flex justify-center items-start pt-[3px] pr-[3px] border-t border-[#8a8a92]">
          <div className="w-[1023px] h-[263px] bg-white">
            <OverviewMap />
          </div>
        </div>
        {/* status */}
        <div className="flex-1 bg-[#f0f0f0] flex">
          <div className="w-[640px] border-r border-[#d4d4d4]" />
        </div>
      </div>
    </div>
  );
}
